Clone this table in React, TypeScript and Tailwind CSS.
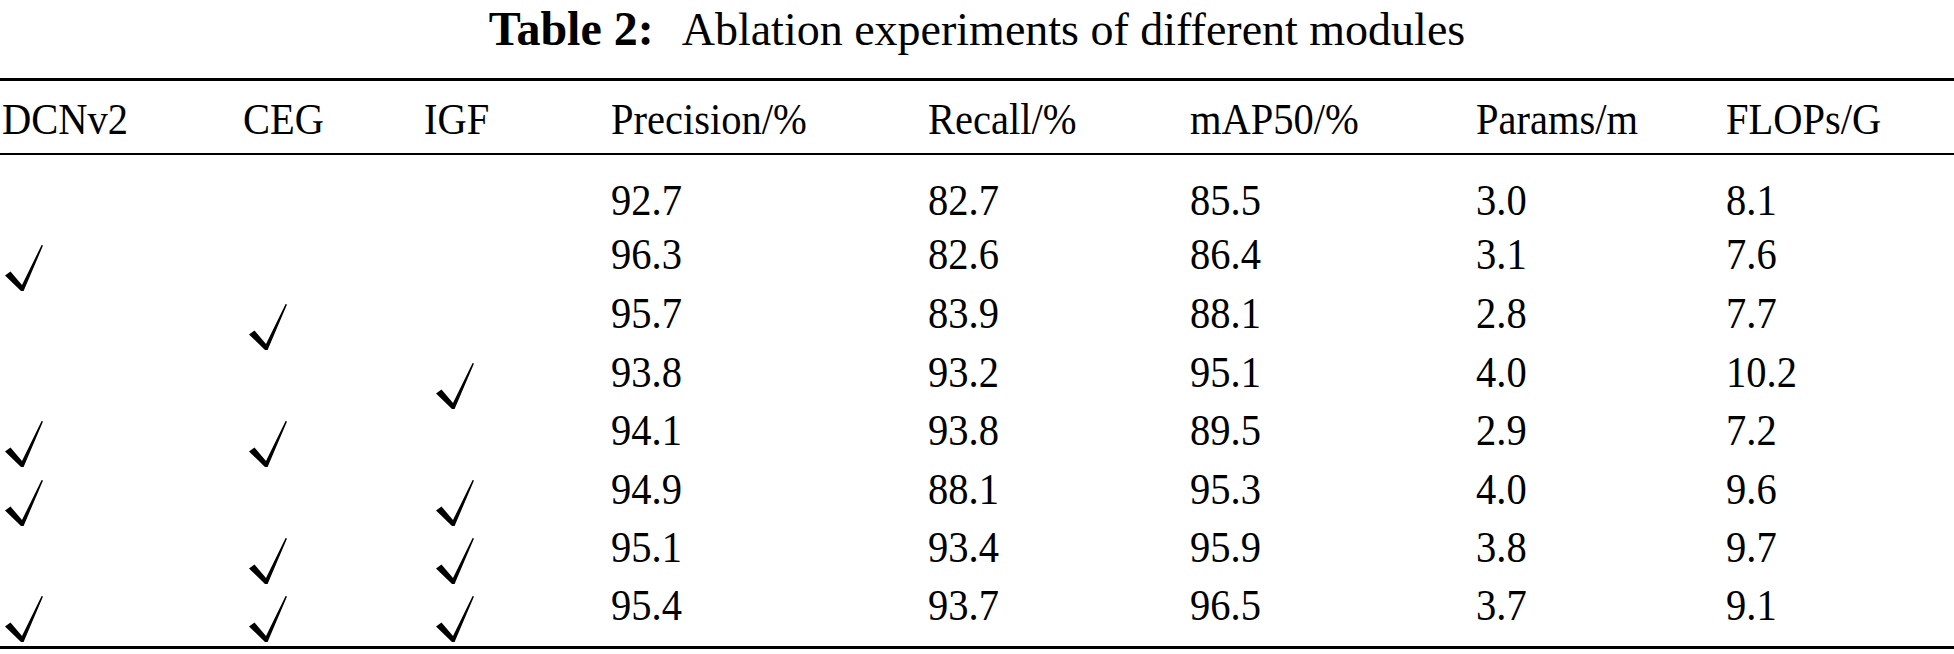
import React from "react";

type Row = {
  marks: [boolean, boolean, boolean];
  values: string[];
  h: string;
};

const rows: Row[] = [
  { marks: [false, false, false], values: ["92.7", "82.7", "85.5", "3.0", "8.1"], h: "h-[54px]" },
  { marks: [true, false, false], values: ["96.3", "82.6", "86.4", "3.1", "7.6"], h: "h-[59px]" },
  { marks: [false, true, false], values: ["95.7", "83.9", "88.1", "2.8", "7.7"], h: "h-[59px]" },
  { marks: [false, false, true], values: ["93.8", "93.2", "95.1", "4.0", "10.2"], h: "h-[58px]" },
  { marks: [true, true, false], values: ["94.1", "93.8", "89.5", "2.9", "7.2"], h: "h-[59px]" },
  { marks: [true, false, true], values: ["94.9", "88.1", "95.3", "4.0", "9.6"], h: "h-[58px]" },
  { marks: [false, true, true], values: ["95.1", "93.4", "95.9", "3.8", "9.7"], h: "h-[58px]" },
  { marks: [true, true, true], values: ["95.4", "93.7", "96.5", "3.7", "9.1"], h: "h-[63px]" },
];

const headers = ["DCNv2", "CEG", "IGF", "Precision/%", "Recall/%", "mAP50/%", "Params/m", "FLOPs/G"];

const cols = "grid grid-cols-[241px_181px_187px_317px_262px_286px_250px_1fr] pl-[2px]";

// per-column nudge for the check marks
const markOffset = ["ml-[3px]", "ml-[6px]", "ml-[12px]"];

// the table's check mark, drawn since the font's radical is too narrow
const Check = ({ className }: { className: string }) => (
  <svg width="38" height="46" viewBox="0 0 38 46" className={`mt-[13px] ${className}`}>
    <polygon points="0,30.5 5.5,26.5 17,40 36.6,0 38,0.6 18.6,46 16,46" fill="#000" />
  </svg>
);

// text in the scan is a narrow Times, so squeeze it a little
const Cell = ({ children }: { children: React.ReactNode }) => (
  <div className="origin-left scale-x-[0.9] whitespace-nowrap">{children}</div>
);

export default function App() {
  return (
    <div className="w-[1954px] h-[654px] bg-white text-black font-['Liberation_Serif',serif] text-[45px] leading-none">
      <div className="h-[78px] pt-[5px] text-center text-[46px]">
        <span className="font-bold text-[48px]">Table 2:</span>
        <span className="ml-[28px]">Ablation experiments of different modules</span>
      </div>

      <div className="border-t-[3px] border-b-[3px] border-black">
        <div className={`${cols} h-[74px] pt-[16px] border-b-[2px] border-black`}>
          {headers.map((h) => (
            <Cell key={h}>{h}</Cell>
          ))}
        </div>

        <div className="pt-[23px]">
          {rows.map((row, i) => (
            <div key={i} className={`${cols} ${row.h}`}>
              {row.marks.map((m, j) => (
                <div key={j}>{m ? <Check className={markOffset[j]} /> : null}</div>
              ))}
              {row.values.map((v, j) => (
                <Cell key={j}>{v}</Cell>
              ))}
            </div>
          ))}
        </div>
      </div>
    </div>
  );
}
